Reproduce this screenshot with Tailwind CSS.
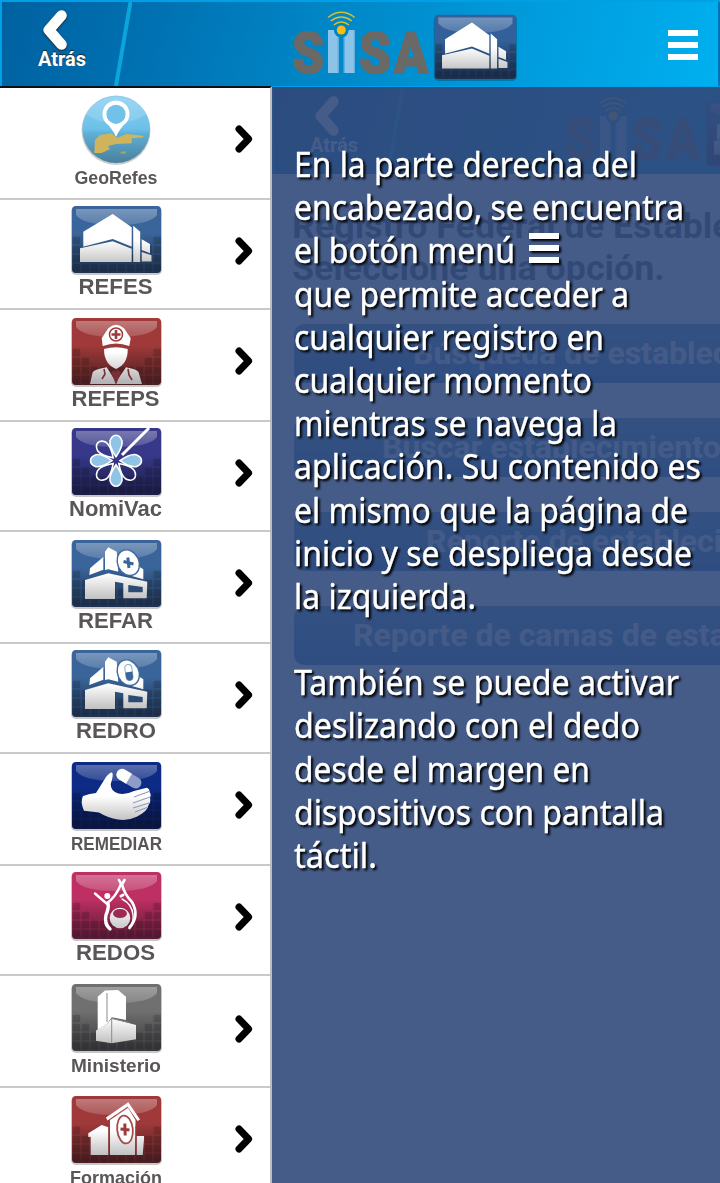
<!DOCTYPE html>
<html lang="es">
<head>
<meta charset="utf-8">
<title>SIISA - Menú</title>
<script src="https://cdn.jsdelivr.net/npm/@tailwindcss/browser@4"></script>
</head>
<body class="w-[720px] h-[1183px] overflow-hidden bg-white">

<!-- Shared symbols -->
<svg class="absolute w-0 h-0" aria-hidden="true">
  <defs>
    <linearGradient id="shade" x1="0" y1="0" x2="0" y2="1">
      <stop offset="0.4" stop-color="#000" stop-opacity="0"/>
      <stop offset="1" stop-color="#0a0a14" stop-opacity="0.55"/>
    </linearGradient>
    <linearGradient id="gloss" x1="0" y1="0" x2="0" y2="1">
      <stop offset="0" stop-color="#fff" stop-opacity="0.32"/>
      <stop offset="1" stop-color="#fff" stop-opacity="0.16"/>
    </linearGradient>
    <linearGradient id="metal" gradientUnits="userSpaceOnUse" x1="0" y1="34" x2="0" y2="64">
      <stop offset="0" stop-color="#fff"/>
      <stop offset="1" stop-color="#b4b4b6"/>
    </linearGradient>
    <linearGradient id="globe" x1="0" y1="0" x2="0" y2="1">
      <stop offset="0" stop-color="#8dd0f0"/>
      <stop offset="0.5" stop-color="#6ac0e8"/>
      <stop offset="0.56" stop-color="#5fafd6"/>
      <stop offset="1" stop-color="#4a7f9c"/>
    </linearGradient>
    <pattern id="cells" width="9" height="9" patternUnits="userSpaceOnUse" x="0" y="3">
      <rect x="0.8" y="0.8" width="7.4" height="7.4" rx="1" fill="#000" fill-opacity="0.18"/>
    </pattern>
    <clipPath id="tileclip"><rect width="89" height="67" rx="4"/></clipPath>
  </defs>
  <symbol id="tile" viewBox="-12 -4 114 102">
    <rect x="-1" y="0.5" width="91" height="68.5" rx="5" fill="#000" fill-opacity="0.22"/>
    <rect width="89" height="67" rx="4" fill="currentColor"/>
    <g clip-path="url(#tileclip)">
      <path d="M4 3H85V9Q78 19 44 19Q11 19 4 9Z" fill="url(#gloss)"/>
      <path d="M0 30H9V39H18V48H72V39H80V30H89V67H0Z" fill="url(#cells)"/>
      <rect width="89" height="67" fill="url(#shade)"/>
    </g>
  </symbol>
  <symbol id="house" viewBox="-12 -4 114 102">
    <g fill="url(#metal)">
      <path d="M11.3 25.7L40.7 8L59.7 21.3V40.7L40.7 33L11.3 40.7Z"/>
      <path d="M8 42.3L40.7 35.2L59.7 42.7V56H8Z"/>
      <path d="M61.2 19.7L68.2 25.7V56H61.2Z"/>
      <path d="M69.7 33.3L78 38V47.3L69.7 44Z"/>
      <path d="M69.7 46L79.5 49.3V55.5H69.7Z"/>
    </g>
  </symbol>
  <symbol id="shop" viewBox="-12 -4 114 102">
    <g fill="url(#metal)">
      <path d="M18 28.3L31.3 17V29.8L17.3 35Z"/>
      <path d="M33 11.7L36.3 7.3L44.7 11.7L46.3 31.7L36.3 29.3L33 30Z"/>
      <path d="M67.3 26.7L71.3 29.3V39.3L58 35.5Z"/>
      <path d="M13 40L36.3 33.3L75.3 41.7L74.7 58.3H51.3V43.3L43 41.7V59H13Z"/>
    </g>
    <path d="M56.3 45L70.7 47V52.3H56.3Z" fill="#2d4a75"/>
    <ellipse cx="56.3" cy="22.7" rx="10.7" ry="13.2" transform="rotate(-25 56.3 22.7)" fill="#fff" stroke="#3f6a9e" stroke-width="1.4"/>
  </symbol>
  <symbol id="go" viewBox="0 0 18 28">
    <path d="M4 4L13.6 14L4 24" fill="none" stroke="currentColor" stroke-width="7" stroke-linecap="round" stroke-linejoin="round"/>
  </symbol>
  <symbol id="back" viewBox="0 0 26 42">
    <path d="M19.5 6L6.8 20.5L19.5 35" transform="translate(0 .5)" fill="none" stroke="currentColor" stroke-width="10.6" stroke-linecap="round" stroke-linejoin="round"/>
  </symbol>
  <symbol id="siisa" viewBox="288 0 235 86">
    <g font-family="Roboto, sans-serif" font-weight="900" font-size="57" fill="#6a6966" stroke="#6a6966" stroke-width="1.6">
      <text x="292" y="72.500" textLength="32" lengthAdjust="spacingAndGlyphs">S</text>
      <text x="359" y="72.500" textLength="32" lengthAdjust="spacingAndGlyphs">S</text>
      <text x="394" y="72.500" textLength="34" lengthAdjust="spacingAndGlyphs">A</text>
    </g>
    <path d="M328 30H338.5V73H328ZM344 30H354.7V73H344Z" fill="#8cc4e9"/>
    <path d="M337.5 30H339V73H337.5ZM343.5 30H345V73H343.5ZM353.8 30H355V73H353.8Z" fill="#64aede"/>
    <circle cx="341.3" cy="30.3" r="7.3" fill="#0084c4"/>
    <circle cx="341.3" cy="30" r="4.5" fill="#fdbb12"/>
    <path d="M328 17.5Q341.3 7 354.7 17.5M330.8 21Q341.3 13.2 351.8 21M333.7 25Q341.3 19.2 349 25" fill="none" stroke="#d9bf2a" stroke-width="1.5"/>
    <g transform="translate(434.7 14.7) scale(.915 .96)" color="#33609a">
      <use href="#tile" x="-12" y="-4" width="114" height="102"/>
      <use href="#house" x="-12" y="-4" width="114" height="102"/>
    </g>
  </symbol>
</svg>

<!-- Top bar -->
<header class="relative flex h-[86px] w-[720px] border-t-2 border-l-2 border-[#00a0e6] bg-[linear-gradient(106deg,#0061a0_0%,#0072b3_22%,#0084c4_42%,#0097d8_66%,#00b0f0_100%)]">
  <a class="flex w-[116px] flex-col items-center pt-[7px] text-white">
    <svg class="-ml-[11px] h-[42px] w-[26px] drop-shadow-[0_1px_1px_#222]"><use href="#back"/></svg>
    <span class="-mt-[3px] ml-1 font-['Roboto'] text-[20px] leading-[22px] font-bold [text-shadow:0_-1px_1px_#222]">Atrás</span>
  </a>
  <svg class="-ml-1.5 h-[84px] w-[20px]" viewBox="0 0 20 84"><path d="M18.5 0L4 84" stroke="#0ca5db" stroke-width="4"/></svg>
  <svg class="-mt-0.5 ml-[156px] h-[86px] w-[235px]"><use href="#siisa"/></svg>
  <div class="mt-7 ml-[145px] flex flex-col gap-1.5">
    <i class="h-1.5 w-[30px] bg-white"></i><i class="h-1.5 w-[30px] bg-white"></i><i class="h-1.5 w-[30px] bg-white"></i>
  </div>
  <div class="ml-auto w-0.5 bg-[#0072b5]"></div>
</header>

<div class="flex h-[1097px]">
  <!-- Register list -->
  <nav class="w-[272px] shrink-0 overflow-hidden border-t-2 border-r-2 border-t-[#0c0f16] border-r-[#bdbdbd] bg-white font-['Liberation_Sans'] font-bold">
    <div class="flex h-[112px] border-b-2 border-[#c9c9c9] pt-1">
      <svg class="ml-[60px] h-[102px] w-[114px] blur-[0.6px]" viewBox="-12 -4 114 102">
        <circle cx="44" cy="34.500" r="34.500" fill="#000" fill-opacity=".2"/>
        <g transform="translate(0 -4)">
          <circle cx="44.200" cy="37.300" r="33.800" fill="url(#globe)"/>
          <path d="M14 22Q24 5 44 5Q64 5 74 22Q60 32 44 31Q28 32 14 22Z" fill="#fff" fill-opacity=".14"/>
          <path d="M23 48L28 43L39.700 41.300L44.700 46L54.700 42L71.300 43.700V45.500L59.700 46.300V51.300L44 52L36 54L38 57L29.700 61L22.300 61Z" fill="#d0b45c"/>
          <path d="M48 60L54 59V61.500H49Z" fill="#a5a36a"/>
          <path d="M44 45Q40 36 34 31A13.500 13.500 0 1 1 54 31Q48 36 44 45Z" fill="#fff"/>
          <circle cx="44" cy="22.300" r="9.600" fill="#72c1e8"/>
        </g>
        <text x="2.500" y="88" font-size="17.500" textLength="83" lengthAdjust="spacingAndGlyphs" fill="#5a5657">GeoRefes</text>
      </svg>
      <svg class="mt-[33px] ml-[61px] h-7 w-[18px]"><use href="#go"/></svg>
    </div>
    <div class="flex h-[110px] border-b-2 border-[#c9c9c9] pt-0.5">
      <svg class="ml-[60px] h-[102px] w-[114px] text-[#3a659b] blur-[0.6px]" viewBox="-12 -4 114 102">
        <use href="#tile" x="-12" y="-4" width="114" height="102"/>
        <use href="#house" x="-12" y="-4" width="114" height="102"/>
        <text x="6.5" y="88" font-size="22" textLength="74" lengthAdjust="spacingAndGlyphs" fill="#5a5657">REFES</text>
      </svg>
      <svg class="mt-[35px] ml-[61px] h-7 w-[18px]"><use href="#go"/></svg>
    </div>
    <div class="flex h-[112px] border-b-2 border-[#c9c9c9] pt-1">
      <svg class="ml-[60px] h-[102px] w-[114px] text-[#a03a3a] blur-[0.6px]" viewBox="-12 -4 114 102">
        <use href="#tile" x="-12" y="-4" width="114" height="102"/>
        <g fill="url(#metal)">
          <path d="M29.7 20.3L36.3 10.3Q44 3 52 10.3L58.7 20.3L57.3 28Q44 23 30.7 28Z"/>
          <path d="M32 31Q44 27.5 55.7 31Q56 46 44 51Q32 46 32 31Z"/>
          <path d="M18 66L20.7 54Q24 51 34.7 49.3L44 64L54 49.3Q64 51 66.5 54L70 66Z"/>
        </g>
        <circle cx="44" cy="16.5" r="6.5" fill="#fff" stroke="#a03a3a" stroke-width="1.5"/>
        <path d="M44 12V21M39.5 16.5H48.5" stroke="#a03a3a" stroke-width="2.600"/>
        <path d="M32 51L33 56L30 61M56 51L57 57L60 62" fill="none" stroke="#7a3034" stroke-width="1.6"/>
        <path d="M39 54L44 67L49 54L46 52.500L44 54L42 52.500Z" fill="#7a3034"/>
        <text x="-.5" y="88" font-size="22" textLength="88" lengthAdjust="spacingAndGlyphs" fill="#5a5657">REFEPS</text>
      </svg>
      <svg class="mt-[33px] ml-[61px] h-7 w-[18px]"><use href="#go"/></svg>
    </div>
    <div class="flex h-[110px] border-b-2 border-[#c9c9c9] pt-0.5">
      <svg class="ml-[60px] h-[102px] w-[114px] text-[#37388a] blur-[0.6px]" viewBox="-12 -4 114 102">
        <use href="#tile" x="-12" y="-4" width="114" height="102"/>
        <g transform="translate(44 32.7)" stroke="#fff" stroke-width="1.6">
          <g fill="#90c4e6">
            <path d="M0-4Q-7-14-6-20Q-4-25.500 0-25.500Q4-25.500 6-20Q7-14 0-4Z"/>
            <path d="M0-4Q-7-14-6-20Q-4-25.500 0-25.500Q4-25.500 6-20Q7-14 0-4Z" transform="rotate(90)"/>
            <path d="M0-4Q-7-14-6-20Q-4-25.500 0-25.500Q4-25.500 6-20Q7-14 0-4Z" transform="rotate(180)"/>
            <path d="M0-4Q-7-14-6-20Q-4-25.500 0-25.500Q4-25.500 6-20Q7-14 0-4Z" transform="rotate(270)"/>
          </g>
          <g fill="none">
            <path d="M0-4Q-7-14-6-20Q-4-25.500 0-25.500Q4-25.500 6-20Q7-14 0-4Z" transform="rotate(-45)"/>
            <path d="M0-4Q-7-14-6-20Q-4-25.500 0-25.500Q4-25.500 6-20Q7-14 0-4Z" transform="rotate(135)"/>
            <path d="M0-4Q-7-14-6-20Q-4-25.500 0-25.500Q4-25.500 6-20Q7-14 0-4Z" transform="rotate(225)"/>
          </g>
        </g>
        <path d="M50 27L77 0" stroke="#fff" stroke-width="3"/>
        <text x="-3" y="88" font-size="21.500" textLength="93" lengthAdjust="spacingAndGlyphs" fill="#5a5657">NomiVac</text>
      </svg>
      <svg class="mt-[35px] ml-[61px] h-7 w-[18px]"><use href="#go"/></svg>
    </div>
    <div class="flex h-[112px] border-b-2 border-[#c9c9c9] pt-1">
      <svg class="ml-[60px] h-[102px] w-[114px] text-[#3a659b] blur-[0.6px]" viewBox="-12 -4 114 102">
        <use href="#tile" x="-12" y="-4" width="114" height="102"/>
        <use href="#shop" x="-12" y="-4" width="114" height="102"/>
        <path d="M55.800 17.500L57 28M51.500 21.500L61.500 24" stroke="#3a659b" stroke-width="3"/>
        <text x="6" y="88" font-size="22" textLength="75" lengthAdjust="spacingAndGlyphs" fill="#5a5657">REFAR</text>
      </svg>
      <svg class="mt-[33px] ml-[61px] h-7 w-[18px]"><use href="#go"/></svg>
    </div>
    <div class="flex h-[110px] border-b-2 border-[#c9c9c9] pt-0.5">
      <svg class="ml-[60px] h-[102px] w-[114px] text-[#3a659b] blur-[0.6px]" viewBox="-12 -4 114 102">
        <use href="#tile" x="-12" y="-4" width="114" height="102"/>
        <use href="#shop" x="-12" y="-4" width="114" height="102"/>
        <g transform="rotate(-8 57 23)">
          <rect x="53.500" y="14.500" width="7" height="16" rx="3.500" fill="#fff" stroke="#8faccb" stroke-width="1"/>
          <path d="M53.500 22H60.500V27Q60 30.500 57 30.500Q54 30.500 53.500 27Z" fill="#3a659b"/>
        </g>
        <text x="4" y="88" font-size="22" textLength="80" lengthAdjust="spacingAndGlyphs" fill="#5a5657">REDRO</text>
      </svg>
      <svg class="mt-[35px] ml-[61px] h-7 w-[18px]"><use href="#go"/></svg>
    </div>
    <div class="flex h-[112px] border-b-2 border-[#c9c9c9] pt-1">
      <svg class="ml-[60px] h-[102px] w-[114px] text-[#0d2a84] blur-[0.6px]" viewBox="-12 -4 114 102">
        <use href="#tile" x="-12" y="-4" width="114" height="102"/>
        <path d="M11 34Q18 31.500 24 31L34 15Q38 10 40 10.500Q42 12 38.700 22Q38.500 29 46.300 31.500Q54 33 62 29L74.700 25.700Q78 27 77.500 30Q79.500 32 78 36Q79 40 76.500 43Q76 49 64.700 54.700Q56 59 46 57.500Q36 56 27 50.500L12 48.700Q8 40 11 34Z" fill="url(#metal)"/>
        <path d="M62 35L77 29.500M61 41L78 35M61 46L77 41M63 50L75 45.500" stroke="#8a93b8" stroke-width="1"/>
        <g transform="rotate(31 57 16.700)">
          <rect x="43.500" y="11" width="27" height="11.500" rx="5.500" fill="#8e9cc8"/>
          <path d="M57 11H49A5.700 5.700 0 0 0 49 22.500H57Z" fill="#fff"/>
        </g>
        <text x="-1" y="88" font-size="17.500" textLength="91" lengthAdjust="spacingAndGlyphs" fill="#5a5657">REMEDIAR</text>
      </svg>
      <svg class="mt-[33px] ml-[61px] h-7 w-[18px]"><use href="#go"/></svg>
    </div>
    <div class="flex h-[110px] border-b-2 border-[#c9c9c9] pt-0.5">
      <svg class="ml-[60px] h-[102px] w-[114px] text-[#be3063] blur-[0.6px]" viewBox="-12 -4 114 102">
        <use href="#tile" x="-12" y="-4" width="114" height="102"/>
        <g fill="none" stroke="#fff" stroke-linecap="round">
          <path d="M23 21.500L34.500 31.500Q44 25 49 12" stroke-width="2.400"/>
          <path d="M36 31Q37 36 34 43Q32 52 38 57" stroke-width="3.400"/>
          <path d="M47 8L49.700 13L52.500 8M49.700 11Q52 22 60 30Q68 44 57.500 56" stroke-width="2.600"/>
          <path d="M50 27Q60 32 61 43Q62 50 57 55" stroke-width="1.400"/>
          <path d="M49 24L51 23" stroke-width="3"/>
        </g>
        <circle cx="35.300" cy="24" r="3" fill="#fff"/>
        <circle cx="48" cy="46" r="10.300" fill="url(#metal)"/>
        <ellipse cx="48" cy="41.500" rx="7" ry="4.500" fill="#9b2b55"/>
        <text x="4" y="88" font-size="22" textLength="79" lengthAdjust="spacingAndGlyphs" fill="#5a5657">REDOS</text>
      </svg>
      <svg class="mt-[35px] ml-[61px] h-7 w-[18px]"><use href="#go"/></svg>
    </div>
    <div class="flex h-[112px] border-b-2 border-[#c9c9c9] pt-1">
      <svg class="ml-[60px] h-[102px] w-[114px] text-[#707070] blur-[0.6px]" viewBox="-12 -4 114 102">
        <use href="#tile" x="-12" y="-4" width="114" height="102"/>
        <path d="M25.700 12.700L33 6.500L46 6L54 12.700V36L39.700 33.300L35 40L25.700 46Z" fill="#fff"/>
        <path d="M24 46.500L35 40L39.700 34.500L64 41V55.300L39.700 59.300L24 56.700Z" fill="url(#metal)"/>
        <path d="M35 9V38M39.700 35V59M39.700 34.500L57 38.500" fill="none" stroke="#8b8b8b" stroke-width="1"/>
        <text x="-1" y="88" font-size="18.500" textLength="90" lengthAdjust="spacingAndGlyphs" fill="#5a5657">Ministerio</text>
      </svg>
      <svg class="mt-[35px] ml-[61px] h-7 w-[18px]"><use href="#go"/></svg>
    </div>
    <div class="flex h-[110px] pt-1">
      <svg class="ml-[60px] h-[102px] w-[114px] text-[#a03a3a] blur-[0.6px]" viewBox="-12 -4 114 102">
        <use href="#tile" x="-12" y="-4" width="114" height="102"/>
        <g fill="url(#metal)">
          <path d="M16.300 37.300L29.700 29L36.300 31.300V59H18.700V40.700L16.300 41Z"/>
          <path d="M38 24L56 12L63.500 24L63 59H38Z"/>
          <path d="M64.700 40H72V43L70.700 59H64.700Z"/>
          <path d="M34 21.500L56.300 6.300L68 23.500L65.500 25L55.500 10.500L35.500 24.500Z"/>
        </g>
        <path d="M37 28V58M64 30V58" stroke="#a03a3a" stroke-width="1"/>
        <ellipse cx="53" cy="33.500" rx="7.800" ry="14" transform="rotate(-6 53 33.500)" fill="#fff" stroke="#a54b4b" stroke-width="1.800"/>
        <path d="M52.800 27.500L53.200 39.500M48.500 33L57.500 34" stroke="#a03a3a" stroke-width="3"/>
        <text x="-2" y="88" font-size="18.500" textLength="92" lengthAdjust="spacingAndGlyphs" fill="#5a5657">Formación</text>
      </svg>
      <svg class="mt-[33px] ml-[61px] h-7 w-[18px]"><use href="#go"/></svg>
    </div>
  </nav>

  <!-- Page pushed to the right by the open menu -->
  <main class="relative w-[448px] overflow-hidden border-t border-[#00a0e6] bg-white">
    <div class="w-[720px] font-['Roboto'] font-bold">
      <div class="flex h-[87px] border-l-2 border-[#00a0e6] bg-[linear-gradient(106deg,#0061a0_0%,#0072b3_22%,#0084c4_42%,#0097d8_66%,#00b0f0_100%)]">
        <div class="flex w-[116px] flex-col items-center pt-2 text-white">
          <svg class="-ml-[11px] h-[42px] w-[26px]"><use href="#back"/></svg>
          <span class="-mt-[3px] ml-1 text-[20px] leading-[22px]">Atrás</span>
        </div>
        <svg class="-ml-1.5 h-[87px] w-[20px]" viewBox="0 0 20 84"><path d="M18.500 0L4 84" stroke="#0ca5db" stroke-width="4"/></svg>
        <svg class="-mt-px ml-[156px] h-[86px] w-[235px]"><use href="#siisa"/></svg>
      </div>
      <div class="px-[20px] pt-[31px] text-[35.8px] leading-[42px] whitespace-nowrap text-[#444]">
        <p>Registro Federal de Establecimientos</p>
        <p>Seleccione una opción.</p>
      </div>
      <div class="mt-[35px] ml-[22px] flex w-[678px] flex-col gap-[35px] text-[32px] leading-[59px] whitespace-nowrap text-[#f4f4f4]">
        <div class="h-[59px] rounded-[10px] bg-linear-to-b from-[#4888b0] to-[#2868b0] pl-[119px]">Búsqueda de establecimientos</div>
        <div class="h-[59px] rounded-[10px] bg-linear-to-b from-[#4888b0] to-[#2868b0] pl-[88px]">Buscar establecimientos cercanos</div>
        <div class="h-[59px] rounded-[10px] bg-linear-to-b from-[#4888b0] to-[#2868b0] pl-[132px]">Reporte de establecimientos</div>
        <div class="h-[59px] rounded-[10px] bg-linear-to-b from-[#4888b0] to-[#2868b0] pl-[59px]">Reporte de camas de establecimientos</div>
      </div>
    </div>

    <div class="absolute inset-0 bg-[#314a7c]/90"></div>

    <!-- Help text -->
    <div class="absolute inset-0 flex flex-col pt-[57px] pl-[22px] font-['Noto_Sans'] text-[34px] [&_text]:fill-white [&_text]:stroke-white [&_text]:[stroke-width:0.4px] [&_svg]:h-[43.200px] [&_svg]:w-[426px] [&_svg]:shrink-0 [&_svg]:overflow-visible [&_svg]:drop-shadow-[2.5px_2.5px_1px_#000]">
      <svg><text x="0" y="33" textLength="343" lengthAdjust="spacingAndGlyphs">En la parte derecha del</text></svg>
      <svg><text x="0" y="33" textLength="390" lengthAdjust="spacingAndGlyphs">encabezado, se encuentra</text></svg>
      <svg><text x="0" y="33" textLength="221" lengthAdjust="spacingAndGlyphs">el botón menú</text><path d="M235 3H265V9H235ZM235 15H265V21H235ZM235 27H265V33H235Z" fill="#fff"/></svg>
      <svg><text x="0" y="33" textLength="335" lengthAdjust="spacingAndGlyphs">que permite acceder a</text></svg>
      <svg><text x="0" y="33" textLength="310" lengthAdjust="spacingAndGlyphs">cualquier registro en</text></svg>
      <svg><text x="0" y="33" textLength="298" lengthAdjust="spacingAndGlyphs">cualquier momento</text></svg>
      <svg><text x="0" y="33" textLength="323" lengthAdjust="spacingAndGlyphs">mientras se navega la</text></svg>
      <svg><text x="0" y="33" textLength="407" lengthAdjust="spacingAndGlyphs">aplicación. Su contenido es</text></svg>
      <svg><text x="0" y="33" textLength="394" lengthAdjust="spacingAndGlyphs">el mismo que la página de</text></svg>
      <svg><text x="0" y="33" textLength="398" lengthAdjust="spacingAndGlyphs">inicio y se despliega desde</text></svg>
      <svg><text x="0" y="33" textLength="182" lengthAdjust="spacingAndGlyphs">la izquierda.</text></svg>
      <svg></svg>
      <svg><text x="0" y="33" textLength="385" lengthAdjust="spacingAndGlyphs">También se puede activar</text></svg>
      <svg><text x="0" y="33" textLength="346" lengthAdjust="spacingAndGlyphs">deslizando con el dedo</text></svg>
      <svg><text x="0" y="33" textLength="296" lengthAdjust="spacingAndGlyphs">desde el margen en</text></svg>
      <svg><text x="0" y="33" textLength="370" lengthAdjust="spacingAndGlyphs">dispositivos con pantalla</text></svg>
      <svg><text x="0" y="33" textLength="83" lengthAdjust="spacingAndGlyphs">táctil.</text></svg>
    </div>
  </main>
</div>
</body>
</html>
